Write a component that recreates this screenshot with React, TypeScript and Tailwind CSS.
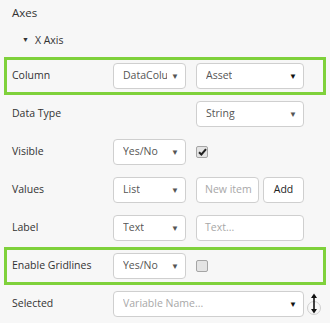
import type { ReactNode } from 'react';

function Select({ value, width, dark, placeholder }: { value: string; width: string; dark?: boolean; placeholder?: boolean }) {
  return (
    <div className={`${width} h-[26px] bg-white border border-[#cfcfcf] rounded-[4px] flex items-center justify-between pl-[9px] pr-[6px] overflow-hidden`}>
      <span className={`whitespace-nowrap overflow-hidden ${placeholder ? 'text-[#a8a8a8]' : 'text-[#555]'}`}>{value}</span>
      <span className={`text-[8px] ml-1 ${dark ? 'text-[#111]' : 'text-[#555]'}`}>▼</span>
    </div>
  );
}

function Input({ placeholder, width }: { placeholder: string; width: string }) {
  return (
    <div className={`${width} h-[26px] bg-white border border-[#cfcfcf] rounded-[4px] flex items-center pl-[8px] text-[#a8a8a8] whitespace-nowrap overflow-hidden`}>
      {placeholder}
    </div>
  );
}

function Checkbox({ checked }: { checked?: boolean }) {
  return (
    <div className="w-[12px] h-[12px] rounded-[2px] border border-[#a5a5a5] bg-[#e4e4e4] flex items-center justify-center">
      {checked && (
        <svg width="9" height="8" viewBox="0 0 9 8">
          <path d="M1 4.2 L3.4 6.5 L8 1.2" stroke="#222" strokeWidth="2" fill="none" />
        </svg>
      )}
    </div>
  );
}

function Row({ label, highlight, children }: { label: string; highlight?: boolean; children: ReactNode }) {
  return (
    <div className={`h-[38px] mx-[4px] border-[3px] ${highlight ? 'border-[#7fd13b]' : 'border-transparent'} flex items-center pl-[5px]`}>
      <div className="w-[101px] text-[#333]">{label}</div>
      {children}
    </div>
  );
}

export default function App() {
  return (
    <div className="w-[330px] h-[323px] bg-[#f7f7f7] text-[10.5px] overflow-hidden" style={{ fontFamily: '"Open Sans", sans-serif' }}>
      <div className="pl-[12px] pt-[4px] h-[27px] text-[11.5px] text-[#333]">Axes</div>
      <div className="pl-[22px] h-[27px] flex items-center text-[#333]">
        <span className="text-[7px] mr-[6px]">▼</span>
        <span>X Axis</span>
      </div>
      <div className="h-[3px]" />
      <Row label="Column" highlight>
        <Select value="DataColu" width="w-[73px]" />
        <div className="w-[10px]" />
        <Select value="Asset" width="w-[108px]" dark />
      </Row>
      <Row label="Data Type">
        <div className="w-[83px]" />
        <Select value="String" width="w-[108px]" />
      </Row>
      <Row label="Visible">
        <Select value="Yes/No" width="w-[73px]" />
        <div className="w-[10px]" />
        <Checkbox checked />
      </Row>
      <Row label="Values">
        <Select value="List" width="w-[73px]" />
        <div className="w-[10px]" />
        <Input placeholder="New item" width="w-[63px]" />
        <div className="w-[4px]" />
        <div className="w-[41px] h-[26px] bg-white border border-[#cfcfcf] rounded-[4px] flex items-center justify-center text-[#222]">Add</div>
      </Row>
      <Row label="Label">
        <Select value="Text" width="w-[73px]" />
        <div className="w-[10px]" />
        <Input placeholder="Text..." width="w-[108px]" />
      </Row>
      <Row label="Enable Gridlines" highlight>
        <Select value="Yes/No" width="w-[73px]" />
        <div className="w-[10px]" />
        <Checkbox />
      </Row>
      <Row label="Selected">
        <Select value="Variable Name..." width="w-[191px]" dark placeholder />
        <svg width="16" height="26" viewBox="0 0 16 26" className="ml-[2px]">
          <circle cx="8" cy="17" r="6.5" fill="none" stroke="#cfcfcf" strokeWidth="1" />
          <path d="M8 4 V21" stroke="#111" strokeWidth="1.6" />
          <path d="M5 7 L8 2.5 L11 7 Z" fill="#111" />
          <path d="M5 18 L8 22.5 L11 18 Z" fill="#111" />
        </svg>
      </Row>
    </div>
  );
}
